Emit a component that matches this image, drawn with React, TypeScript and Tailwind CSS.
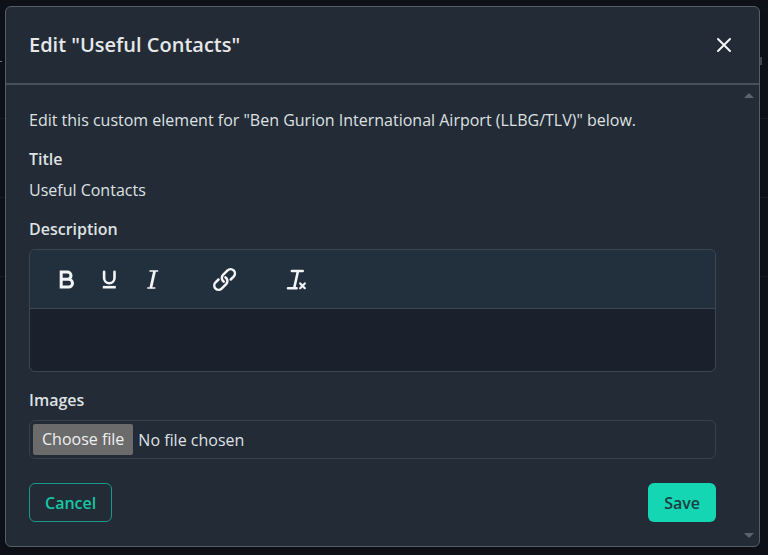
import React, { useState } from 'react';

interface ToolButtonProps {
  label: string;
  children: React.ReactNode;
}

const ToolButton: React.FC<ToolButtonProps> = ({ label, children }) => (
  <button
    type="button"
    aria-label={label}
    className="flex h-10 w-[43px] items-center justify-center text-[#f3f5f6] hover:text-white"
  >
    <svg
      viewBox="0 0 25 24"
      fill="none"
      stroke="currentColor"
      strokeLinecap="round"
      strokeLinejoin="round"
      className="h-6 w-[25px] overflow-visible"
    >
      {children}
    </svg>
  </button>
);

const Toolbar: React.FC = () => (
  <div className="flex h-[59px] items-center gap-[29px] rounded-t-md border-b border-[#3a4753] bg-[#222f3d] px-[15px]">
    <div className="flex">
      <ToolButton label="Bold">
        <path
          strokeWidth={3}
          strokeLinejoin="miter"
          d="M7.2 5.1h6.2a3.6 3.6 0 0 1 0 7.2H7.2zM7.2 12.3h7.4a3.9 3.9 0 0 1 0 7.8H7.2z"
        />
      </ToolButton>
      <ToolButton label="Underline">
        <path strokeWidth={2.6} d="M7.1 4.8v6.2a5.2 5.2 0 0 0 10.4 0V4.8" />
        <path strokeWidth={2.6} strokeLinecap="butt" d="M5.8 20.2h13" />
      </ToolButton>
      <ToolButton label="Italic">
        <path strokeWidth={1.6} d="M10 4h7.6M7.8 21h7" />
        <path strokeWidth={2.8} strokeLinecap="butt" d="M14.6 4l-3.8 17" />
      </ToolButton>
    </div>
    <ToolButton label="Insert link">
      <g strokeWidth={2.5} transform="rotate(-45 12.6 12.5)">
        <path d="M8.3 8.2H4.1a4.3 4.3 0 0 0 0 8.6h6.4a4.3 4.3 0 0 0 4.2-5.2" />
        <path d="M16.9 16.8h4.2a4.3 4.3 0 0 0 0-8.6h-6.4a4.3 4.3 0 0 0-4.2 5.2" />
      </g>
    </ToolButton>
    <ToolButton label="Clear formatting">
      <path strokeWidth={2.6} d="M7.9 4h10.8M4 21.2h8.6M14 4l-3.8 17" />
      <path strokeWidth={2.2} d="M16.2 16.4l4.6 4.8M20.8 16.4l-4.6 4.8" />
    </ToolButton>
  </div>
);

const Backdrop: React.FC = () => (
  <div aria-hidden="true" className="absolute inset-0 -z-10 overflow-hidden bg-[#0e1117]">
    <div className="flex h-[119px] items-center justify-between border-b border-[#191c22]">
      <span className="mt-1 h-px w-[2px] bg-[#777a7e]" />
      <span className="mr-[6px] mt-1 h-2 w-[2px] bg-[#45494e]" />
    </div>
    <div className="h-[79px] border-b border-[#191c22]" />
    <div className="h-[79px] border-b border-[#191c22]" />
  </div>
);

const App: React.FC = () => {
  const [title, setTitle] = useState('Useful Contacts');
  const [description, setDescription] = useState('');
  const [fileName, setFileName] = useState('No file chosen');

  return (
    <div className="relative isolate flex min-h-screen flex-col pt-[6px] pr-2 pb-2 pl-[5px] font-['Open_Sans','Noto_Sans',sans-serif] text-base text-[#dfe1e3]">
      <Backdrop />
      <div
        role="dialog"
        aria-labelledby="dialog-title"
        className="flex flex-1 flex-col rounded-md border border-[#555e67] bg-[#222b36] shadow-lg"
      >
        <header className="flex h-[78px] items-center justify-between border-b-2 border-[#46515c] px-[23px]">
          <h2 id="dialog-title" className="text-xl font-semibold text-[#e6e7e8]">
            Edit "Useful Contacts"
          </h2>
          <button type="button" aria-label="Close" className="flex h-6 w-6 items-center justify-center">
            <svg
              viewBox="0 0 16 16"
              fill="none"
              stroke="#f3f5f6"
              strokeWidth={2}
              strokeLinecap="round"
              className="h-4 w-4"
            >
              <path d="M2 2l12 12M14 2L2 14" />
            </svg>
          </button>
        </header>

        <div className="flex flex-1">
          <form className="flex-1 px-[23px] pt-[23px] pb-6" onSubmit={(e) => e.preventDefault()}>
            <p>Edit this custom element for "Ben Gurion International Airport (LLBG/TLV)" below.</p>

            <label htmlFor="title" className="mt-[15px] block font-semibold">
              Title
            </label>
            <input
              id="title"
              type="text"
              value={title}
              onChange={(e) => setTitle(e.target.value)}
              className="mt-[7px] block h-6 w-full bg-transparent outline-none"
            />

            <label htmlFor="description" className="mt-[15px] block font-semibold">
              Description
            </label>
            <div className="mt-2 rounded-md border border-[#3a4753]">
              <Toolbar />
              <textarea
                id="description"
                value={description}
                onChange={(e) => setDescription(e.target.value)}
                className="block h-[62px] w-full resize-none rounded-b-md bg-[#1a202c] px-6 py-4 outline-none"
              />
            </div>

            <span id="images-label" className="mt-4 block font-semibold">
              Images
            </span>
            <label className="mt-2 flex h-[39px] cursor-pointer items-center gap-[5px] rounded-md border border-[#36414d] px-[3px]">
              <input
                type="file"
                aria-labelledby="images-label"
                onChange={(e) => setFileName(e.target.files?.[0]?.name ?? 'No file chosen')}
                className="sr-only"
              />
              <span className="rounded-xs bg-[#6b6b6b] px-[9px] py-[3px] leading-[25px] text-[#f0f0f0]">
                Choose file
              </span>
              <span>{fileName}</span>
            </label>

            <div className="mt-6 flex justify-between font-semibold">
              <button
                type="button"
                className="h-[39px] rounded-md border border-[#1a9a86] px-[15px] text-[#16c7a3]"
              >
                Cancel
              </button>
              <button type="submit" className="h-[39px] rounded-md bg-[#15d6b2] px-4 text-[#183f45]">
                Save
              </button>
            </div>
          </form>

          <div aria-hidden="true" className="flex w-5 flex-col items-center justify-between py-2 text-[#5b646d]">
            <svg viewBox="0 0 10 5" fill="currentColor" className="h-[5px] w-[10px]">
              <path d="M0 5L5 0l5 5z" />
            </svg>
            <svg viewBox="0 0 10 5" fill="currentColor" className="h-[5px] w-[10px]">
              <path d="M0 0h10L5 5z" />
            </svg>
          </div>
        </div>
      </div>
    </div>
  );
};

export default App;
